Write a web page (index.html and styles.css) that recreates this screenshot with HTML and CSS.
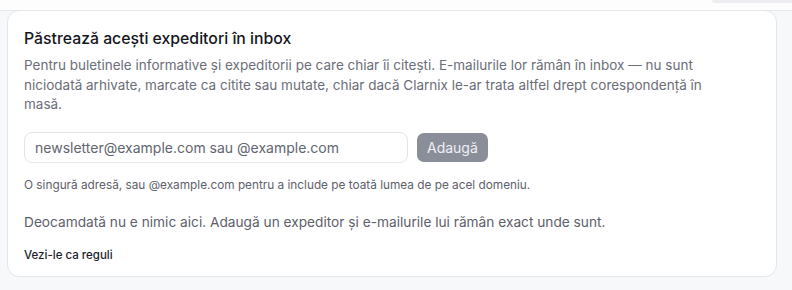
FILE: index.html
```html
<!DOCTYPE html>
<html lang="ro">
<head>
  <meta charset="UTF-8">
  <meta name="viewport" content="width=device-width, initial-scale=1.0">
  <title>Expeditori în inbox</title>
  <link rel="stylesheet" href="styles.css">
</head>
<body>
  <div class="topbar"><span class="topbar-btn"></span></div>

  <div class="card">
    <h2>Păstrează acești expeditori în inbox</h2>
    <p class="note">Pentru buletinele informative și expeditorii pe care chiar îi citești. E-mailurile lor rămân în inbox — nu sunt niciodată arhivate, marcate ca citite sau mutate, chiar dacă Clarnix le-ar trata altfel drept corespondență în masă.</p>

    <div class="add-row">
      <input type="text" class="sender-input" placeholder="newsletter@example.com sau @example.com">
      <button class="add-btn" disabled>Adaugă</button>
    </div>
    <p class="hint">O singură adresă, sau @example.com pentru a include pe toată lumea de pe acel domeniu.</p>

    <p class="empty">Deocamdată nu e nimic aici. Adaugă un expeditor și e-mailurile lui rămân exact unde sunt.</p>

    <a class="rules-link" href="#">Vezi-le ca reguli</a>
  </div>
</body>
</html>
```

FILE: styles.css
```css
body {
  font-family: Inter, "Noto Sans", sans-serif;
  margin: 0;
  background: #f7f8fa;
  color: #1a1b25;
}

.topbar {
  height: 11px;
  background: #fdfdfe;
  border-bottom: 1px solid #e6e8ec;
  box-sizing: border-box;
  display: flex;
  justify-content: flex-end;
}

.topbar-btn {
  width: 80px;
  height: 3px;
  background: #eceef2;
  border-radius: 0 0 0 4px;
}

.card {
  background: #fff;
  margin: -1px 15px 0 7px;
  padding: 18px 16px 11px;
  border: 1px solid #e4e6ea;
  border-radius: 12px;
  height: 267px;
  box-sizing: border-box;
}

.card h2 {
  font-size: 15.8px;
  font-weight: 500;
  margin: 0 0 7px;
  line-height: 20px;
  color: #15161d;
}

.note {
  font-size: 13.5px;
  line-height: 19.5px;
  color: #6b6e78;
  margin: 0 0 17px;
  padding-right: 31px;
}

.add-row {
  display: flex;
  align-items: center;
  gap: 9px;
}

.sender-input {
  width: 384px;
  height: 31px;
  box-sizing: border-box;
  border: 1px solid #e3e5e9;
  border-radius: 8px;
  padding: 0 10px;
  font-family: inherit;
  font-size: 14px;
  outline: none;
}

.sender-input::placeholder {
  color: #62656f;
}

.add-btn {
  height: 29px;
  padding: 0 10px;
  border: none;
  border-radius: 7px;
  background: #8a8e99;
  color: #eef0f3;
  font-family: inherit;
  font-size: 14px;
}

.hint {
  font-size: 11.8px;
  color: #5d606a;
  margin: 15px 0 0;
  line-height: 15px;
}

.empty {
  font-size: 13.7px;
  color: #5d606a;
  margin: 20px 0 0;
  line-height: 19px;
}

.rules-link {
  display: inline-block;
  margin-top: 16px;
  font-size: 11.5px;
  font-weight: 500;
  color: #1c1d2b;
  text-decoration: none;
}
```
